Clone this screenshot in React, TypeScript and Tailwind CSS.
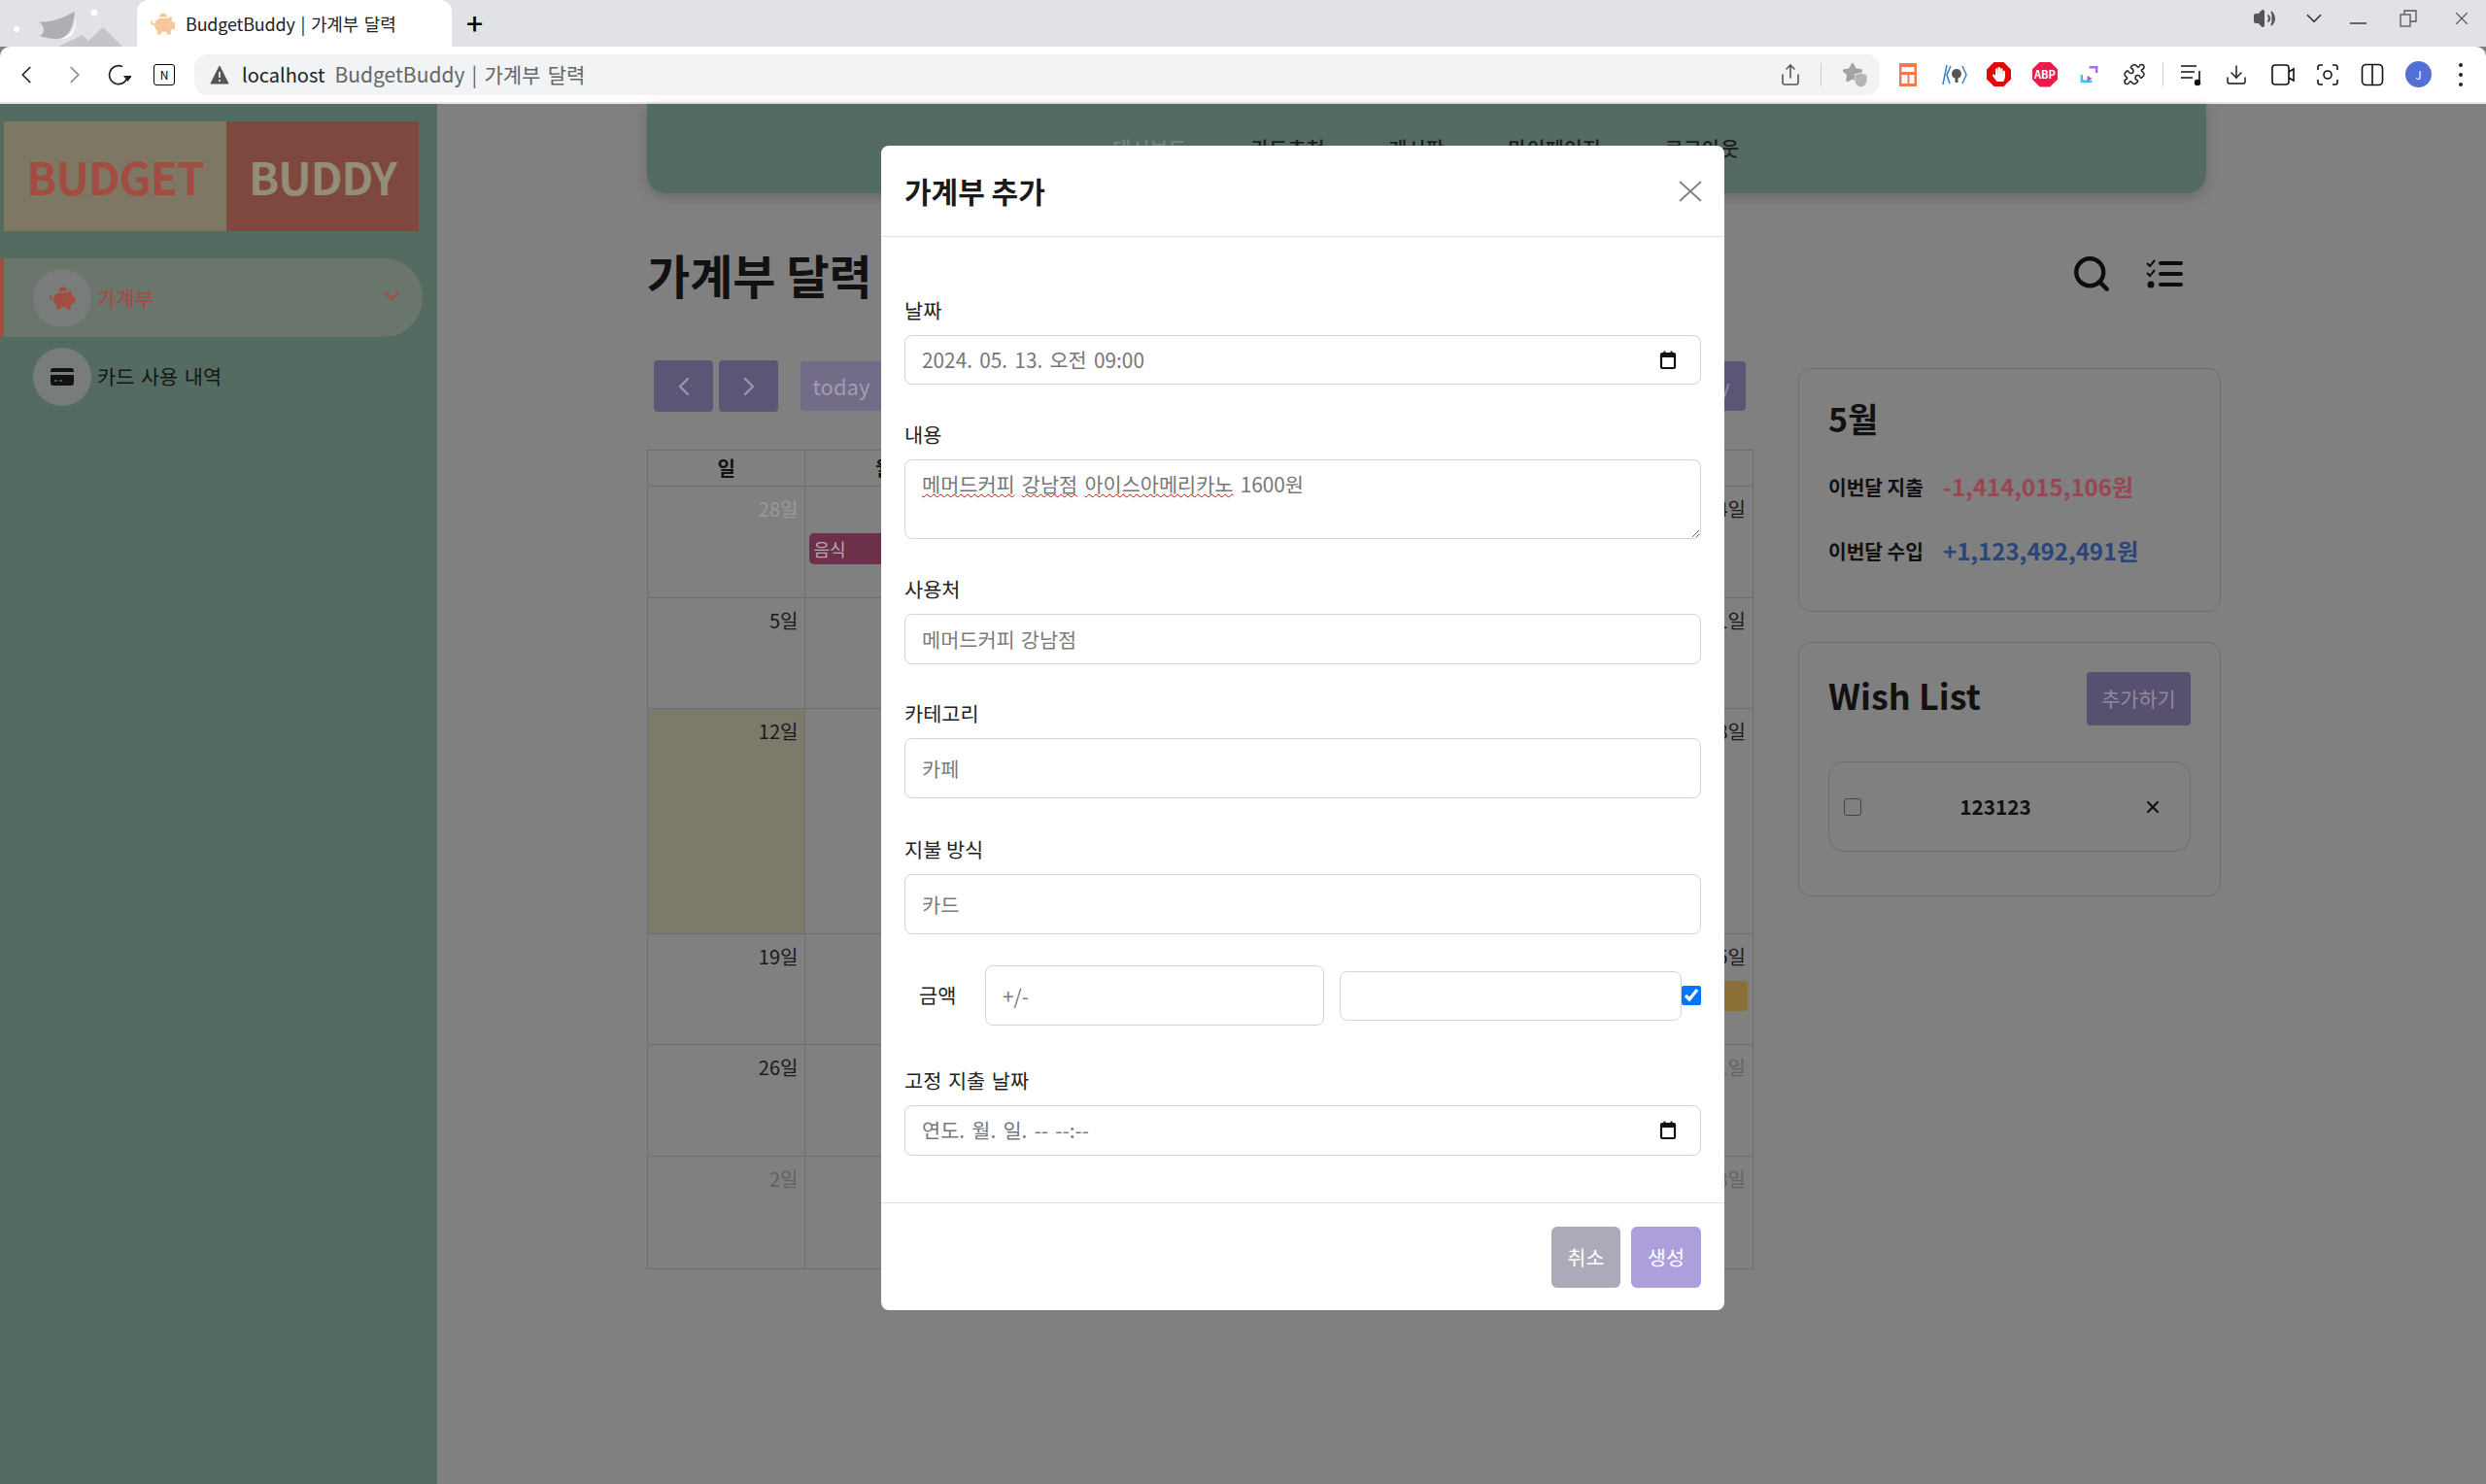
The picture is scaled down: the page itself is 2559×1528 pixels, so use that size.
import { FaPiggyBank, FaHandPaper } from 'react-icons/fa'
import { ChevronDown, ChevronLeft, ChevronRight, Download, Puzzle, Search, Share, Star, Volume2, X } from 'lucide-react'

// only Sunday and Monday headers stick out from behind the modal
const WEEKDAYS = ['일', '월', '', '', '', '', '']

// dim: columns that belong to another month
const WEEKS = [
  { h: 'h-[115px]', days: ['28', '', '', '', '', '', '4'], dim: [0] },
  { h: 'h-[114px]', days: ['5', '', '', '', '', '', '11'], dim: [] },
  { h: 'h-[232px]', days: ['12', '', '', '', '', '', '18'], dim: [] },
  { h: 'h-[114px]', days: ['19', '', '', '', '', '', '25'], dim: [] },
  { h: 'h-[115px]', days: ['26', '', '', '', '', '', '1'], dim: [6] },
  { h: 'h-[115px]', days: ['2', '', '', '', '', '', '8'], dim: [0, 6] }
]

const NAV = ['카드추천', '게시판', '마이페이지', '로그아웃']

function DateCaret() {
  return (
    <svg viewBox="0 0 20 24" className="w-[20px] h-[24px]" fill="none">
      <rect x="3" y="5" width="14" height="15" rx="1" stroke="#111" strokeWidth="2.2" />
      <rect x="3" y="5" width="14" height="4" fill="#111" />
      <path d="M6.5 2.5v3M13.5 2.5v3" stroke="#111" strokeWidth="2" />
    </svg>
  )
}

function Field({ label, placeholder, top, inputH }: { label: string; placeholder: string; top: string; inputH: string }) {
  return (
    <div className={top}>
      <div className="h-[31px] leading-[31px] text-[20.8px] text-[#222]">{label}</div>
      <input
        readOnly
        placeholder={placeholder}
        className={`${inputH} mt-[10px] w-full bg-white border border-[#cfd3d8] rounded-[8px] px-[17px] text-[20.8px] [word-spacing:1.5px] outline-none placeholder:text-[#7b7b7b]`}
      />
    </div>
  )
}

function DateField({ label, value, top, inputH }: { label: string; value: string; top: string; inputH: string }) {
  return (
    <div className={top}>
      <div className="h-[31px] leading-[31px] text-[20.8px] text-[#222] [word-spacing:2px]">{label}</div>
      <div className={`${inputH} mt-[10px] flex items-center justify-between border border-[#cfd3d8] rounded-[8px] pl-[17px] pr-[23px] text-[20.8px] text-[#777] [word-spacing:2.6px]`}>
        <span>{value}</span>
        <DateCaret />
      </div>
    </div>
  )
}

function BrowserChrome() {
  return (
    <div className="shrink-0">
      {/* tab strip */}
      <div className="h-[48px] bg-[#e1e2e6] flex items-stretch">
        <svg viewBox="0 0 141 48" className="w-[141px] h-[48px] shrink-0">
          <circle cx="17" cy="30" r="3" fill="#fff" />
          <circle cx="97" cy="13" r="3.5" fill="#fff" />
          <path d="M60 48l25-12 6 6 15-14 20 20z" fill="#c4c5c9" />
          <path d="M40 22c8 2 22-2 37-10-1 14-6 28-18 28-6 0-14-1-18-3 6-3 5-10-1-15z" fill="#aeafb3" />
          <path d="M77 12c3 12-2 24-14 28 12 1 18-12 14-28z" fill="#fff" />
        </svg>
        <div className="w-[324px] bg-white rounded-t-[12px] flex items-center pl-[14px] gap-[11px]">
          <FaPiggyBank className="w-[25px] h-[25px] text-[#f5c79a]" />
          <span className="text-[18px] text-[#222] tracking-[-0.2px] [word-spacing:2px]">BudgetBuddy | 가계부 달력</span>
        </div>
        <div className="ml-[15px] text-[30px] leading-[46px] font-medium text-black">+</div>
        <div className="ml-auto flex items-center pr-[14px] pb-[10px] text-[#333]">
          <Volume2 className="w-[24px] h-[24px] text-[#555]" fill="#555" />
          <ChevronDown className="ml-[26px] w-[26px] h-[26px]" strokeWidth={1.6} />
          <div className="ml-[24px] mt-[10px] w-[17px] h-[1.5px] bg-[#666]" />
          <svg viewBox="0 0 18 18" className="ml-[34px] w-[18px] h-[18px]" fill="none" stroke="#555" strokeWidth="1.3">
            <rect x="1" y="5" width="10" height="12" />
            <path d="M5 5V1h12v11h-6" />
          </svg>
          <X className="ml-[35px] w-[22px] h-[22px] text-[#555]" strokeWidth={1.2} />
        </div>
      </div>

      {/* toolbar */}
      <div className="h-[57px] bg-white rounded-t-[10px] flex items-center">
        <ChevronLeft className="ml-[12px] w-[30px] h-[30px] text-[#222]" strokeWidth={1.4} />
        <ChevronRight className="ml-[20px] w-[30px] h-[30px] text-[#888]" strokeWidth={1.4} />
        <svg viewBox="0 0 26 26" className="ml-[17px] w-[26px] h-[26px]" fill="none">
          <path d="M17 4.5A9.5 9.5 0 1 0 22.5 14" stroke="#222" strokeWidth="1.6" />
          <path d="M18 14h9l-4.5 6z" fill="#222" />
        </svg>
        <div className="ml-[23px] w-[22px] h-[22px] rounded-[3px] border-[1.5px] border-black flex items-center justify-center text-[12px] leading-none text-black">N</div>
        <div className="ml-[20px] w-[1735px] h-[42px] bg-[#f1f3f4] rounded-[14px] flex items-center">
          <svg viewBox="0 0 20 20" className="ml-[16px] w-[20px] h-[20px]">
            <path d="M10 1l9 18H1z" fill="#555" stroke="#555" strokeLinejoin="round" />
            <path d="M10 7v6M10 15v2" stroke="#fff" strokeWidth="1.6" />
          </svg>
          <span className="ml-[13px] text-[20px] text-[#222]">localhost</span>
          <span className="ml-[10px] text-[21px] text-[#666] [word-spacing:2.5px]">BudgetBuddy | 가계부 달력</span>
          <Share className="ml-auto w-[24px] h-[26px] text-[#555]" strokeWidth={1.6} />
          <div className="ml-[19px] w-px h-[24px] bg-[#ccc]" />
          <div className="ml-[21px] mr-[13px] w-[26px] h-[26px] relative">
            <Star className="w-[22px] h-[22px] text-[#a3a3a3]" fill="#a3a3a3" />
            <svg viewBox="0 0 14 16" className="absolute right-0 bottom-0 w-[13px] h-[15px]">
              <path d="M0 2l7-2 7 2v6c0 4-3 7-7 8-4-1-7-4-7-8z" fill="#b5b5b5" stroke="#f1f3f4" strokeWidth="1" />
            </svg>
          </div>
        </div>
        <div className="ml-[20px] flex items-center">
          <svg viewBox="0 0 18 24" className="w-[18px] h-[24px]">
            <rect width="18" height="24" fill="#ee7a4d" />
            <rect x="2.5" y="4" width="13" height="5" fill="#fff" />
            <rect x="2.5" y="12" width="6" height="9" fill="#fff" />
            <rect x="10.5" y="12" width="5" height="9" fill="#fff" />
          </svg>
          <svg viewBox="0 0 26 24" className="ml-[26px] w-[26px] h-[24px]" fill="none" stroke="#3f86c6" strokeWidth="1.6">
            <path d="M5 2L1 22M9 3L5 12l3 9M21 3l4 9-4 9" />
            <circle cx="15" cy="11" r="5" fill="#555" stroke="none" />
            <path d="M15 14v6" stroke="#555" strokeWidth="3" />
          </svg>
          <div className="ml-[20px] w-[25px] h-[25px] relative">
            <svg viewBox="0 0 25 25" className="w-full h-full">
              <polygon points="7.5,0 17.5,0 25,7.5 25,17.5 17.5,25 7.5,25 0,17.5 0,7.5" fill="#dd0a0a" />
            </svg>
            <FaHandPaper className="absolute left-[6px] top-[5px] w-[13px] h-[15px] text-white" />
          </div>
          <div className="ml-[22px] w-[26px] h-[26px] flex items-center justify-center text-white text-[11px] font-bold bg-[#ec1b4b] [clip-path:polygon(30%_0,70%_0,100%_30%,100%_70%,70%_100%,30%_100%,0_70%,0_30%)]">ABP</div>
          <svg viewBox="0 0 24 24" className="ml-[22px] w-[23px] h-[24px]" fill="none" strokeWidth="2.6">
            <path d="M11 4h8v6" stroke="#a76be8" />
            <path d="M3 12v7h11" stroke="#3fc0ee" />
            <path d="M9 13l5 3-5 3z" fill="#b04be0" />
          </svg>
          <Puzzle className="ml-[22px] w-[24px] h-[25px] text-[#222]" strokeWidth={1.5} />
          <div className="ml-[17px] w-px h-[24px] bg-[#ccc]" />
          <svg viewBox="0 0 24 24" className="ml-[17px] w-[24px] h-[24px]" fill="none" stroke="#111" strokeWidth="1.6">
            <path d="M1 3h16M1 9h14M1 15h12M20 8v12" />
            <circle cx="18" cy="20" r="2.4" fill="#111" />
          </svg>
          <Download className="ml-[22px] w-[24px] h-[24px] text-[#111]" strokeWidth={1.4} />
          <svg viewBox="0 0 24 24" className="ml-[24px] w-[24px] h-[24px]" fill="none" stroke="#111" strokeWidth="1.6">
            <rect x="1" y="2" width="17" height="20" rx="3" />
            <path d="M18 9l5-3v12l-5-3" />
          </svg>
          <svg viewBox="0 0 24 24" className="ml-[22px] w-[24px] h-[24px]" fill="none" stroke="#111" strokeWidth="1.6">
            <path d="M2 7V4a2 2 0 0 1 2-2h3M17 2h3a2 2 0 0 1 2 2v3M22 17v3a2 2 0 0 1-2 2h-3M7 22H4a2 2 0 0 1-2-2v-3" />
            <circle cx="12" cy="12" r="4" />
          </svg>
          <svg viewBox="0 0 24 24" className="ml-[22px] w-[24px] h-[24px]" fill="none" stroke="#111" strokeWidth="1.6">
            <rect x="1.5" y="1.5" width="21" height="21" rx="4" />
            <path d="M12 1.5v21" />
          </svg>
          <div className="ml-[22px] w-[27px] h-[27px] rounded-full bg-[#5470d6] text-white text-[12px] flex items-center justify-center">J</div>
          <div className="ml-[28px] flex flex-col gap-[6px]">
            <span className="w-[4px] h-[4px] rounded-full bg-[#222]" />
            <span className="w-[4px] h-[4px] rounded-full bg-[#222]" />
            <span className="w-[4px] h-[4px] rounded-full bg-[#222]" />
          </div>
        </div>
      </div>
      <div className="h-[2px] bg-[#e6e7e8]" />
    </div>
  )
}

function Sidebar() {
  return (
    <aside className="w-[450px] shrink-0 bg-[#546b62] pt-[18px]">
      {/* logo */}
      <div className="ml-[4px] w-[427px] h-[113px] flex text-[46px] font-bold tracking-[-1px]">
        <div className="w-[229px] bg-[#7d7764] text-[#a34d42] flex items-center justify-center">BUDGET</div>
        <div className="w-[198px] bg-[#7f483f] text-[#938e78] flex items-center justify-center">BUDDY</div>
      </div>

      <div className="mt-[28px] w-[435px] h-[81px] flex items-center bg-[#6a766c] border-l-[4px] border-[#a34d42] rounded-r-[40px] pl-[30px] pr-[20px]">
        <div className="w-[60px] h-[60px] rounded-full bg-[#787c7b] flex items-center justify-center">
          <FaPiggyBank className="w-[26px] h-[26px] text-[#a34d42]" />
        </div>
        <span className="ml-[6px] text-[21px] font-medium text-[#a34d42]">가계부</span>
        <ChevronDown className="ml-auto mb-[4px] w-[24px] h-[24px] text-[#a34d42]" strokeWidth={2.6} />
      </div>

      <div className="mt-[11px] pl-[34px] flex items-center">
        <div className="w-[60px] h-[60px] rounded-full bg-[#787d79] flex items-center justify-center">
          <svg viewBox="0 0 24 18" className="w-[24px] h-[18px]">
            <rect width="24" height="18" rx="3" fill="#111" />
            <rect y="4" width="24" height="3" fill="#787d79" />
            <path d="M4 13h3M9 13h3" stroke="#888" strokeWidth="1.2" />
          </svg>
        </div>
        <span className="ml-[6px] text-[20.8px] text-[#151515] [word-spacing:2px]">카드 사용 내역</span>
      </div>
    </aside>
  )
}

function Calendar() {
  return (
    <div className="border border-[#6e6e6e]">
      <div className="grid grid-cols-7 h-[37px] border-b border-[#6e6e6e]">
        {WEEKDAYS.map((d, i) => (
          <div key={i} className={`${i < 6 ? 'border-r border-[#6e6e6e]' : ''} flex items-center justify-center text-[20px] font-bold text-[#111]`}>
            {d}
          </div>
        ))}
      </div>
      {WEEKS.map((w, r) => (
        <div key={r} className={`${w.h} grid grid-cols-7 ${r < 5 ? 'border-b border-[#6e6e6e]' : ''}`}>
          {w.days.map((d, i) => (
            <div
              key={i}
              className={`${i < 6 ? 'border-r border-[#6e6e6e]' : ''} ${r === 2 && i === 0 ? 'bg-[#7c7a6b]' : ''} pt-[7px]`}
            >
              <div
                className={`h-[31px] leading-[31px] text-right pr-[7px] text-[20px] ${
                  w.dim.includes(i) ? (r === 0 ? 'text-[#9a9a9a]' : 'text-[#626262]') : 'text-[#1a1a1a]'
                }`}
              >
                {d && `${d}일`}
              </div>
              {r === 0 && i === 1 && (
                <div className="mt-[10px] ml-[4px] h-[32px] rounded-l-[5px] bg-[#6c304b] text-[#b9a9b0] text-[18px] leading-[32px] pl-[4px]">음식</div>
              )}
              {r === 3 && i === 6 && <div className="mt-[10px] mr-[5px] h-[31px] rounded-[4px] bg-[#8a6f36]" />}
            </div>
          ))}
        </div>
      ))}
    </div>
  )
}

function Panels() {
  return (
    <div className="w-[435px] mt-[8px] ml-[46px] shrink-0">
      <div className="h-[251px] border border-[#6e6e6e] rounded-[13px] pl-[30px] pt-[26px]">
        <div className="text-[34px] leading-[50px] font-bold text-[#111]">5월</div>
        <div className="mt-[25px] flex items-center h-[40px]">
          <span className="w-[118px] text-[20.3px] font-bold text-[#111]">이번달 지출</span>
          <span className="text-[24px] font-bold text-[#9a4650]">-1,414,015,106원</span>
        </div>
        <div className="mt-[26px] flex items-center h-[40px]">
          <span className="w-[118px] text-[20.3px] font-bold text-[#111]">이번달 수입</span>
          <span className="text-[24px] font-bold text-[#2a4578]">+1,123,492,491원</span>
        </div>
      </div>

      <div className="mt-[31px] h-[262px] border border-[#6e6e6e] rounded-[13px] px-[30px] pt-[30px]">
        <div className="flex items-start justify-between">
          <span className="text-[36px] font-bold leading-[46px] text-[#111]">Wish List</span>
          <button className="w-[107px] h-[55px] rounded-[4px] bg-[#57506f] text-[#8f8c9b] text-[20.8px]">추가하기</button>
        </div>
        <div className="mt-[37px] h-[93px] border border-[#6e6e6e] rounded-[16px] flex items-center pl-[15px] pr-[28px]">
          <div className="w-[18px] h-[18px] border-[1.5px] border-[#444] rounded-[3px]" />
          <span className="flex-1 pr-[14px] text-center text-[20.8px] font-bold text-[#111]">123123</span>
          <X className="w-[20px] h-[20px] text-[#111]" strokeWidth={2.6} />
        </div>
      </div>
    </div>
  )
}

function AddModal() {
  return (
    <div className="absolute left-[907px] top-[150px] w-[868px] h-[1199px] bg-white rounded-[8px] text-[20px] text-[#222]">
      <div className="h-[94px] border-b border-[#dee2e6] flex items-center justify-between pl-[24px] pr-[23px]">
        <span className="text-[30px] font-bold text-[#1a1a1a]">가계부 추가</span>
        <svg viewBox="0 0 24 22" className="w-[24px] h-[22px]" fill="none" stroke="#7d7d7d" strokeWidth="1.7">
          <path d="M1 1l22 20M23 1L1 21" />
        </svg>
      </div>

      <div className="px-[24px]">
        <DateField label="날짜" value="2024. 05. 13. 오전 09:00" top="mt-[60px]" inputH="h-[51px]" />

        <div className="mt-[36px]">
          <div className="h-[31px] leading-[31px] text-[20.8px]">내용</div>
          <div className="mt-[10px] h-[82px] border border-[#cfd3d8] rounded-[8px] pl-[17px] pt-[9px] text-[20.8px] text-[#777] [word-spacing:2.5px] resize-y overflow-auto">
            <span className="underline decoration-wavy decoration-[#d00] decoration-1">메머드커피</span>{' '}
            <span className="underline decoration-wavy decoration-[#d00] decoration-1">강남점</span>{' '}
            <span className="underline decoration-wavy decoration-[#d00] decoration-1">아이스아메리카노</span> 1600원
          </div>
        </div>

        <Field label="사용처" placeholder="메머드커피 강남점" top="mt-[36px]" inputH="h-[52px]" />
        <Field label="카테고리" placeholder="카페" top="mt-[35px]" inputH="h-[62px]" />
        <Field label="지불 방식" placeholder="카드" top="mt-[37px]" inputH="h-[62px]" />

        <div className="mt-[32px] h-[62px] flex items-center">
          <span className="w-[83px] pl-[15px] text-[20.8px]">금액</span>
          <input
            readOnly
            placeholder="+/-"
            className="w-[349px] h-[62px] border border-[#cfd3d8] rounded-[8px] px-[17px] text-[20.8px] outline-none placeholder:text-[#7b7b7b]"
          />
          <input readOnly className="ml-[16px] w-[352px] h-[51px] border border-[#cfd3d8] rounded-[8px] outline-none" />
          <input type="checkbox" readOnly checked className="w-[20px] h-[20px] accent-[#0075ff]" />
        </div>

        <DateField label="고정 지출 날짜" value="연도. 월. 일. -- --:--" top="mt-[41px]" inputH="h-[52px]" />
      </div>

      <div className="mt-[48px] border-t border-[#dee2e6] flex justify-end gap-[11px] pt-[24px] pr-[24px]">
        <button className="w-[71px] h-[63px] rounded-[6px] bg-[#aea9b9] text-white text-[20.8px]">취소</button>
        <button className="w-[72px] h-[63px] rounded-[6px] bg-[#ac9fdc] text-white text-[20.8px]">생성</button>
      </div>
    </div>
  )
}

export default function App() {
  return (
    <div className="relative w-[2559px] h-[1528px] overflow-hidden bg-[#808080] flex flex-col font-['Noto_Sans_CJK_KR','Noto_Sans',sans-serif]">
      <BrowserChrome />

      <div className="flex-1 flex min-h-0">
        <Sidebar />

        <main className="flex-1 pl-[216px]">
          {/* top nav */}
          <div className="w-[1605px] h-[92px] bg-[#546b62] rounded-b-[20px] shadow-[0_4px_14px_rgba(0,0,0,0.18)] flex items-center gap-[65.6px] pl-[479px] text-[20.8px] font-medium text-[#1c1c1c]">
            <span className="text-[#74867d]">대시보드</span>
            {NAV.map(n => (
              <span key={n}>{n}</span>
            ))}
          </div>

          {/* title row */}
          <div className="mt-[50px] h-[66px] w-[1581px] flex items-center">
            <h1 className="text-[48px] font-bold text-[#111]">가계부 달력</h1>
            <Search className="ml-auto w-[42px] h-[42px] text-[#0c0c0c]" strokeWidth={2.5} />
            <svg viewBox="0 0 38 30" className="ml-[35px] w-[38px] h-[30px]" fill="none" stroke="#0c0c0c">
              <path d="M1 4l3 3 5-6M1 14l3 3 5-6" strokeWidth="2" />
              <path d="M15 4h21M15 15h21M15 26h21" strokeWidth="4" strokeLinecap="round" />
              <circle cx="5" cy="26" r="3.5" fill="#0c0c0c" stroke="none" />
            </svg>
          </div>

          <div className="mt-[56px] flex items-start">
            <div className="w-[1139px] shrink-0">
              {/* calendar toolbar */}
              <div className="h-[53px] pl-[7px] pr-[8px] flex items-center text-[22px]">
                <button className="w-[61px] h-[53px] rounded-[4px] bg-[#5c5676] flex items-center justify-center">
                  <ChevronLeft className="w-[32px] h-[32px] text-[#9a96aa]" strokeWidth={1.8} />
                </button>
                <button className="ml-[6px] w-[61px] h-[53px] rounded-[4px] bg-[#5c5676] flex items-center justify-center">
                  <ChevronRight className="w-[32px] h-[32px] text-[#9a96aa]" strokeWidth={1.8} />
                </button>
                <button className="ml-[23px] w-[84px] h-[51px] rounded-[4px] bg-[#726c88] text-[#a19dae]">today</button>
                <button className="ml-auto w-[70px] h-[51px] rounded-[4px] bg-[#5c5676] text-[#8f8c9b]">day</button>
              </div>
              <div className="mt-[39px]">
                <Calendar />
              </div>
            </div>
            <Panels />
          </div>
        </main>
      </div>

      <AddModal />
    </div>
  )
}
